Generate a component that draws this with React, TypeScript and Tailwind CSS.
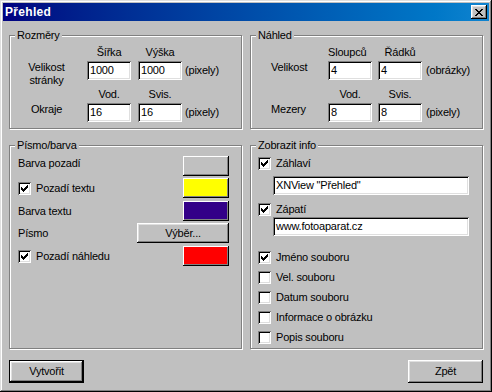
import React from "react";

const raised =
  "shadow-[inset_-1px_-1px_#000,inset_1px_1px_#fff,inset_-2px_-2px_#808080,inset_2px_2px_#dfdfdf]";
const sunken =
  "shadow-[inset_1px_1px_#808080,inset_-1px_-1px_#fff,inset_2px_2px_#000,inset_-2px_-2px_#dfdfdf]";

function Check({ on }: { on?: boolean }) {
  const tops = [2, 3, 4, 3, 2, 1, 0];
  return (
    <span className={`w-[13px] h-[13px] bg-white shrink-0 flex items-center justify-center ${sunken}`}>
      {on && (
        <svg width="7" height="7" viewBox="0 0 7 7" shapeRendering="crispEdges">
          {tops.map((t, i) => (
            <rect key={i} x={i} y={t} width="1" height="3" fill="#000" />
          ))}
        </svg>
      )}
    </span>
  );
}

function Field({ value, className }: { value: string; className: string }) {
  return (
    <div className={`h-[19px] bg-white pl-[3px] flex items-center whitespace-nowrap ${sunken} ${className}`}>
      {value}
    </div>
  );
}

function GroupBox({
  title,
  className,
  children,
}: {
  title: string;
  className: string;
  children: React.ReactNode;
}) {
  return (
    <div className={`relative border border-[#808080] shadow-[inset_1px_1px_#fff,1px_1px_#fff] ${className}`}>
      <span className="absolute left-[5px] -top-[7px] px-[2px] bg-[#c0c0c0] leading-[13px]">{title}</span>
      {children}
    </div>
  );
}

function Swatch({ color }: { color: string }) {
  return (
    <div
      className={`w-[46px] h-[20px] ${color} shadow-[inset_-1px_-1px_#000,inset_1px_1px_#fff,inset_-2px_-2px_#808080]`}
    />
  );
}

function CheckRow({ on, label, className = "" }: { on?: boolean; label: string; className?: string }) {
  return (
    <div className={`flex items-center gap-[5px] h-[13px] leading-[13px] ${className}`}>
      <Check on={on} />
      <span>{label}</span>
    </div>
  );
}

export default function App() {
  return (
    <div className="w-[492px] h-[392px] bg-[#c0c0c0] p-[3px] flex flex-col font-['Liberation_Sans',Arial,sans-serif] text-[11px] tracking-[-0.2px] text-black shadow-[inset_-1px_-1px_#000,inset_1px_1px_#dfdfdf,inset_-2px_-2px_#808080,inset_2px_2px_#fff]">
      <div className="h-[18px] flex items-center justify-between bg-linear-to-r from-[#000080] to-[#1084d0] pl-[2px] pr-[2px]">
        <span className="text-white font-bold text-[12px] tracking-[0.3px] leading-[18px]">Přehled</span>
        <div className={`w-[16px] h-[14px] bg-[#c0c0c0] flex items-center justify-center pr-[1px] ${raised}`}>
          <svg width="8" height="7" viewBox="0 0 8 7" shapeRendering="crispEdges">
            <path
              d="M0 0h2v1H0zM6 0h2v1H6zM1 1h2v1H1zM5 1h2v1H5zM2 2h4v1H2zM3 3h2v1H3zM2 4h4v1H2zM1 5h2v1H1zM5 5h2v1H5zM0 6h2v1H0zM6 6h2v1H6z"
              fill="#000"
            />
          </svg>
        </div>
      </div>

      <div className="flex-1 px-[6px] pt-[14px] flex flex-col">
        <div className="flex gap-[8px]">
          <GroupBox title="Rozměry" className="w-[233px] h-[94px]">
            <div className="pt-[10px] leading-[13px]">
              <div className="flex h-[13px]">
                <div className="w-[73px]" />
                <div className="ml-[4px] w-[44px] text-center">Šířka</div>
                <div className="ml-[7px] w-[44px] text-center">Výška</div>
              </div>
              <div className="flex items-start mt-[2px] h-[27px]">
                <div className="w-[73px] text-center">
                  Velikost
                  <br />
                  stránky
                </div>
                <Field value="1000" className="ml-[4px] w-[44px]" />
                <Field value="1000" className="ml-[7px] w-[44px]" />
                <span className="ml-[3px] mt-[3px]">(pixely)</span>
              </div>
              <div className="flex h-[13px]">
                <div className="w-[73px]" />
                <div className="ml-[4px] w-[44px] text-center">Vod.</div>
                <div className="ml-[7px] w-[44px] text-center">Svis.</div>
              </div>
              <div className="flex items-start mt-[2px]">
                <div className="w-[73px] text-center">Okraje</div>
                <Field value="16" className="ml-[4px] w-[44px]" />
                <Field value="16" className="ml-[7px] w-[44px]" />
                <span className="ml-[3px] mt-[3px]">(pixely)</span>
              </div>
            </div>
          </GroupBox>

          <GroupBox title="Náhled" className="w-[233px] h-[94px]">
            <div className="pt-[10px] leading-[13px]">
              <div className="flex h-[13px]">
                <div className="w-[77px]" />
                <div className="w-[44px] text-center pr-[6px]">Sloupců</div>
                <div className="ml-[6px] w-[44px] text-center">Řádků</div>
              </div>
              <div className="flex items-start mt-[2px] h-[27px]">
                <div className="w-[77px] pl-[20px]">Velikost</div>
                <Field value="4" className="w-[44px]" />
                <Field value="4" className="ml-[6px] w-[44px]" />
                <span className="ml-[4px] mt-[3px]">(obrázky)</span>
              </div>
              <div className="flex h-[13px]">
                <div className="w-[77px]" />
                <div className="w-[44px] text-center">Vod.</div>
                <div className="ml-[6px] w-[44px] text-center">Svis.</div>
              </div>
              <div className="flex items-start mt-[2px]">
                <div className="w-[77px] pl-[20px]">Mezery</div>
                <Field value="8" className="w-[44px]" />
                <Field value="8" className="ml-[6px] w-[44px]" />
                <span className="ml-[4px] mt-[3px]">(pixely)</span>
              </div>
            </div>
          </GroupBox>
        </div>

        <div className="flex gap-[8px] mt-[16px]">
          <GroupBox title="Písmo/barva" className="w-[233px] h-[204px]">
            <div className="pt-[10px] pl-[8px] pr-[12px] flex flex-col leading-[13px]">
              <div className="flex items-center justify-between h-[20px]">
                <span className="mb-[6px]">Barva pozadí</span>
                <Swatch color="bg-[#c0c0c0]" />
              </div>
              <div className="flex items-center justify-between h-[20px] mt-[2px]">
                <CheckRow on label="Pozadí textu" />
                <Swatch color="bg-[#ffff00]" />
              </div>
              <div className="flex items-center justify-between h-[20px] mt-[3px]">
                <span>Barva textu</span>
                <Swatch color="bg-[#330088]" />
              </div>
              <div className="flex items-center justify-between h-[20px] mt-[2px]">
                <span>Písmo</span>
                <div className={`w-[92px] h-[20px] flex items-center justify-center bg-[#c0c0c0] ${raised}`}>
                  Výběr...
                </div>
              </div>
              <div className="flex items-center justify-between h-[20px] mt-[3px]">
                <CheckRow on label="Pozadí náhledu" />
                <Swatch color="bg-[#ff0000]" />
              </div>
            </div>
          </GroupBox>

          <GroupBox title="Zobrazit info" className="w-[233px] h-[204px]">
            <div className="pt-[11px] pl-[7px] flex flex-col">
              <CheckRow on label="Záhlaví" />
              <Field value={'XNView "Přehled"'} className="mt-[6px] ml-[15px] w-[196px]" />
              <CheckRow on label="Zápatí" className="mt-[8px]" />
              <Field value="www.fotoaparat.cz" className="mt-[1px] ml-[15px] w-[196px]" />
              <CheckRow on label="Jméno souboru" className="mt-[15px]" />
              <CheckRow label="Vel. souboru" className="mt-[7px]" />
              <CheckRow label="Datum souboru" className="mt-[7px]" />
              <CheckRow label="Informace o obrázku" className="mt-[7px]" />
              <CheckRow label="Popis souboru" className="mt-[7px]" />
            </div>
          </GroupBox>
        </div>

        <div className="flex justify-between mt-[11px]">
          <button
            className={`w-[75px] h-[23px] border border-black bg-[#c0c0c0] flex items-center justify-center shadow-[inset_-1px_-1px_#000,inset_1px_1px_#fff,inset_-2px_-2px_#808080,inset_2px_2px_#dfdfdf]`}
          >
            Vytvořit
          </button>
          <button className={`w-[75px] h-[23px] bg-[#c0c0c0] flex items-center justify-center ${raised}`}>
            Zpět
          </button>
        </div>
      </div>
    </div>
  );
}
